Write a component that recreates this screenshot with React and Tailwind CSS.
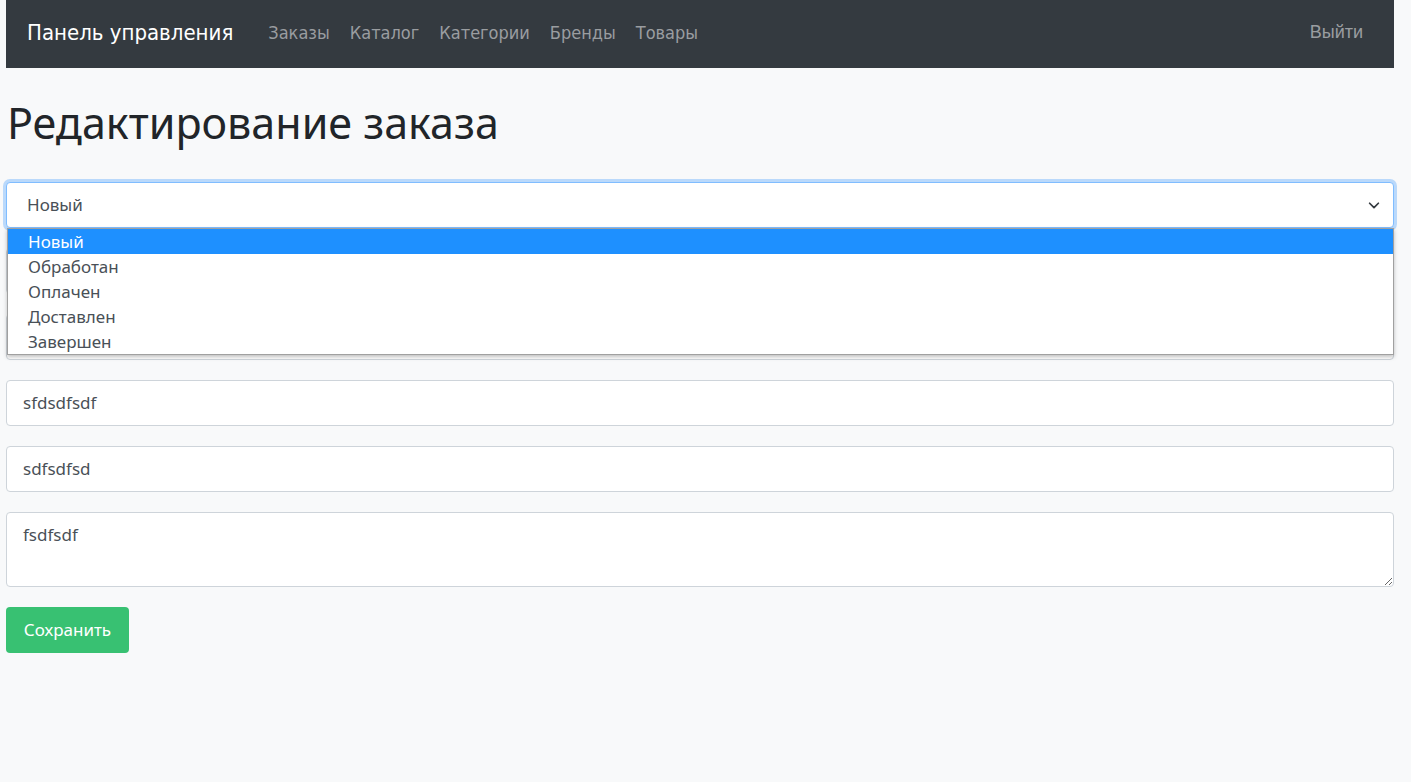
import React from "react";

const statuses = ["Новый", "Обработан", "Оплачен", "Доставлен", "Завершен"];

function Field({ value }) {
  return (
    <input
      type="text"
      defaultValue={value}
      className="w-full h-[46px] px-4 bg-white border border-[#ced4da] rounded-[4px] text-[17px] text-[#495057] outline-none"
    />
  );
}

export default function App() {
  return (
    <div
      className="min-h-screen bg-[#f8f9fa]"
      style={{ fontFamily: "'Noto Sans', sans-serif" }}
    >
      <div className="w-[1388px] ml-[6px]">
        {/* Navbar */}
        <nav className="h-[68px] bg-[#343a40] flex items-center justify-between pl-[21px] pr-[31px] pb-[3px]">
          <div
            className="flex items-center"
            style={{ fontFamily: "'DejaVu Sans Condensed', sans-serif" }}
          >
            <span className="text-white text-[22px] mr-[35px]">Панель управления</span>
            <div className="flex items-center gap-[20px] text-[18px] text-[#9a9da0]">
              <a>Заказы</a>
              <a>Каталог</a>
              <a>Категории</a>
              <a>Бренды</a>
              <a>Товары</a>
            </div>
          </div>
          <a
            className="text-[18px] text-[#9a9da0]"
            style={{ fontFamily: "'Liberation Sans', sans-serif" }}
          >
            Выйти
          </a>
        </nav>

        <h1 className="mt-[29px] mb-[33px] pl-[1px] text-[43px] leading-[1.2] text-[#212529] font-normal">
          Редактирование заказа
        </h1>

        <form className="flex flex-col gap-[20px]">
          {/* Select with open list */}
          <div className="relative">
            <div className="h-[46px] px-[20px] bg-white border border-[#80bdff] rounded-[4px] shadow-[0_0_0_3px_rgba(0,123,255,0.25)] flex items-center justify-between text-[17px] text-[#495057]">
              <span>Новый</span>
              <svg className="w-[14px] h-[14px] -mr-[8px]" viewBox="0 0 16 16" fill="none">
                <path d="M3 6l5 5 5-5" stroke="#343a40" strokeWidth="2" strokeLinecap="round" strokeLinejoin="round" />
              </svg>
            </div>
            <ul className="absolute z-10 left-[1px] right-0 top-[46px] bg-white border border-[#a0a0a0] shadow-[0_2px_4px_rgba(0,0,0,0.25)] text-[17px] text-[#495057]">
              {statuses.map((s, i) => (
                <li
                  key={s}
                  className={
                    i === 0
                      ? "h-[25px] leading-[25px] pl-[20px] bg-[#1e90ff] text-white"
                      : "h-[25px] leading-[25px] pl-[20px]"
                  }
                >
                  {s}
                </li>
              ))}
            </ul>
          </div>

          <Field value="" />
          <Field value="" />
          <Field value="sfdsdfsdf" />
          <Field value="sdfsdfsd" />
          <textarea
            defaultValue="fsdfsdf"
            className="w-full h-[75px] px-4 py-[10px] bg-white border border-[#ced4da] rounded-[4px] text-[17px] leading-[1.4] text-[#495057] outline-none block"
          />
          <div>
            <button
              type="button"
              className="h-[46px] w-[123px] bg-[#38c172] text-white text-[17px] rounded-[4px]"
            >
              Сохранить
            </button>
          </div>
        </form>
      </div>
    </div>
  );
}
